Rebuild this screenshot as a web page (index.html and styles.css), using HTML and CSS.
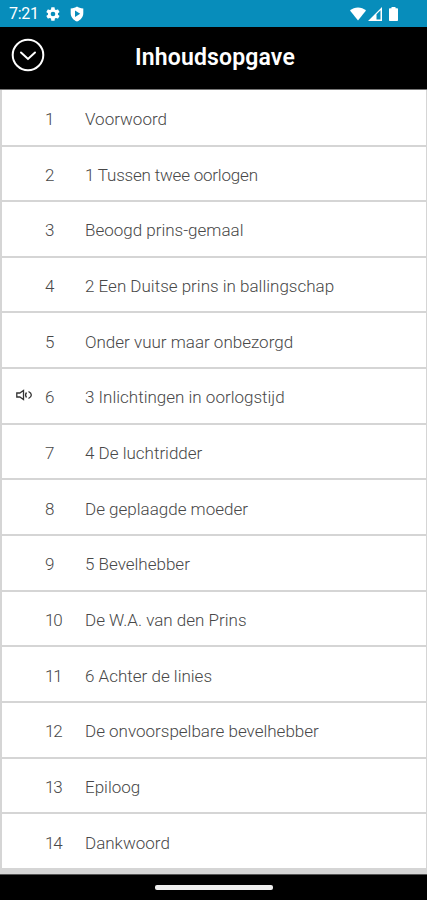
FILE: index.html
```html
<!DOCTYPE html>
<html lang="nl">
<head>
    <meta charset="UTF-8">
    <meta name="viewport" content="width=device-width, initial-scale=1.0">
    <title>Inhoudsopgave</title>
    <link rel="stylesheet" href="styles.css">
</head>
<body>
    <div class="status-bar">
        <span class="time">7:21</span>
        <svg class="gear" width="16" height="16" viewBox="0 0 24 24"><path fill-rule="evenodd" d="M19.4 13a7.500 7.500 0 0 0 0-2l2.100-1.600a.5.5 0 0 0 .1-.7l-2-3.400a.5.5 0 0 0-.6-.2l-2.500 1a7.300 7.300 0 0 0-1.700-1l-.4-2.700a.5.5 0 0 0-.5-.4h-4a.5.5 0 0 0-.5.4L9 5.100a7.300 7.300 0 0 0-1.700 1l-2.500-1a.5.5 0 0 0-.6.2l-2 3.400a.5.5 0 0 0 .1.700L4.500 11a7.500 7.500 0 0 0 0 2l-2.200 1.600a.5.5 0 0 0-.1.700l2 3.400c.1.200.4.300.6.200l2.500-1c.5.400 1.100.7 1.700 1l.4 2.700c0 .2.200.4.500.4h4c.3 0 .5-.2.500-.4l.4-2.700c.6-.3 1.200-.6 1.700-1l2.500 1c.2.100.5 0 .6-.2l2-3.400a.5.5 0 0 0-.1-.7zM12 15.500a3.500 3.500 0 1 1 0-7 3.500 3.500 0 0 1 0 7z"/></svg>
        <svg class="shield" width="14" height="16" viewBox="0 0 14 16"><path fill-rule="evenodd" d="M7 .5C5.500 1.700 3.500 2.300.7 2.500V7c0 4 2.300 6.800 6.300 8.600 4-1.800 6.300-4.600 6.300-8.600V2.500C10.500 2.300 8.500 1.700 7 .5zM5 4.500v6.400l5.200-3.200z"/></svg>
        <div class="status-right">
            <svg width="16" height="14" viewBox="0 0 16 14"><path d="M0 3.600C4.500-.7 11.500-.7 16 3.600L8 13.500z"/></svg>
            <svg width="14" height="14" viewBox="0 0 14 14"><path fill-rule="evenodd" d="M14 0v14H0zM8.500 7.300v5.200h4V3.300z"/></svg>
            <svg class="battery" width="9" height="14" viewBox="0 0 9 14"><path d="M2.500 1.200V0h4v1.200H8c.6 0 1 .4 1 1V13c0 .6-.4 1-1 1H1c-.6 0-1-.4-1-1V2.200c0-.6.4-1 1-1z"/></svg>
        </div>
    </div>

    <header class="header">
        <button class="close" aria-label="Sluiten">
            <svg width="34" height="34" viewBox="0 0 34 34"><circle cx="17" cy="17" r="15.300"/><path d="M10 14.500l7 6.500 7-6.500"/></svg>
        </button>
        <h1>Inhoudsopgave</h1>
    </header>

    <ul class="chapters">
        <li><span class="number">1</span><span class="title">Voorwoord</span></li>
        <li><span class="number">2</span><span class="title narrow">1 Tussen twee oorlogen</span></li>
        <li><span class="number">3</span><span class="title">Beoogd prins-gemaal</span></li>
        <li><span class="number">4</span><span class="title">2 Een Duitse prins in ballingschap</span></li>
        <li><span class="number">5</span><span class="title">Onder vuur maar onbezorgd</span></li>
        <li class="playing">
            <svg class="speaker" width="16" height="12" viewBox="0 0 16 12"><path d="M.8 4v4h3L7.500 10.500v-9L3.800 4zM10.500 3.500c-1.200 1.500-1.200 3.500 0 5M12.500 2.500c3.800 2 3.800 5 0 7"/></svg>
            <span class="number">6</span><span class="title">3 Inlichtingen in oorlogstijd</span>
        </li>
        <li><span class="number">7</span><span class="title">4 De luchtridder</span></li>
        <li><span class="number">8</span><span class="title">De geplaagde moeder</span></li>
        <li><span class="number">9</span><span class="title">5 Bevelhebber</span></li>
        <li><span class="number">10</span><span class="title">De W.A. van den Prins</span></li>
        <li><span class="number">11</span><span class="title">6 Achter de linies</span></li>
        <li><span class="number">12</span><span class="title">De onvoorspelbare bevelhebber</span></li>
        <li><span class="number">13</span><span class="title">Epiloog</span></li>
        <li><span class="number">14</span><span class="title">Dankwoord</span></li>
    </ul>

    <div class="nav-bar"><div class="handle"></div></div>
</body>
</html>
```

FILE: styles.css
```css
* {
    box-sizing: border-box;
}
body {
    display: flex;
    flex-direction: column;
    height: 900px;
    margin: 0;
    background-color: #d5d5d5;
    font-family: Roboto, sans-serif;
    overflow: hidden;
}
svg {
    display: block;
}
.status-bar {
    display: flex;
    align-items: center;
    height: 27px;
    padding: 0 29px 0 9px;
    background-color: #078dbb;
    color: white;
    fill: white;
}
.time {
    width: 36px;
    font-size: 16px;
    letter-spacing: -0.3px;
}
.shield {
    margin-left: 9px;
}
.status-right {
    display: flex;
    gap: 2px;
    margin-left: auto;
}
.battery {
    margin-left: 5px;
}
.header {
    display: grid;
    grid-template-columns: 50px 1fr 58px;
    align-items: center;
    height: 63px;
    padding: 0 0 6px 11px;
    background-color: black;
    border-bottom: 1px solid #777;
    color: white;
}
.close {
    padding: 0;
    border: none;
    background: none;
    cursor: pointer;
}
.close svg {
    fill: none;
    stroke: white;
    stroke-width: 2;
    stroke-linecap: round;
}
h1 {
    margin: 5px 0 0;
    font-size: 23px;
    font-weight: 600;
    letter-spacing: 0.15px;
    text-align: center;
}
.chapters {
    display: flex;
    flex-direction: column;
    gap: 2px;
    height: 778px;
    margin: 0 1px 0 2px;
    padding: 0;
    list-style: none;
}
.chapters li {
    display: flex;
    flex: 1;
    align-items: center;
    padding: 3px 0 0 43px;
    background-color: white;
    color: #484848;
    font-size: 17px;
    font-weight: 300;
}
.chapters li:first-child {
    flex: 0 0 54.5px;
}
.chapters .playing {
    padding-left: 14px;
}
.speaker {
    margin: -4px 13px 0 0;
    fill: none;
    stroke: #333;
    stroke-width: 1.3;
}
.number {
    width: 40px;
    letter-spacing: -1.2px;
}
.narrow {
    letter-spacing: -0.2px;
}
.nav-bar {
    display: flex;
    justify-content: center;
    height: 26px;
    margin-top: auto;
    padding-top: 10px;
    background-color: black;
    border-top: 1px solid #555;
}
.handle {
    width: 118px;
    height: 5px;
    border-radius: 2px;
    background-color: #eee;
}
```
